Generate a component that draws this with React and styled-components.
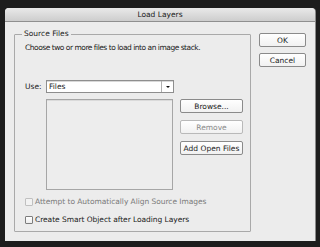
import React from "react";
import styled, { createGlobalStyle } from "styled-components";

const Global = createGlobalStyle`
  html, body { margin: 0; padding: 0; background: #1d1d1d; }
  body { font-family: "DejaVu Sans", "Liberation Sans", sans-serif; }
  #root { padding: 8px 5px 0 5px; }
`;

const Dialog = styled.div`
  width: 310px;
  height: 233px;
  background: #ececec;
  border-radius: 4px 4px 0 0;
  overflow: hidden;
  box-shadow: 1px 0 0 #8a8a8a;
  display: flex;
  flex-direction: column;
`;

const TitleBar = styled.div`
  height: 13px;
  flex: none;
  background: linear-gradient(#e9e9e9, #cdcdcd);
  border-bottom: 1px solid #8f8f8f;
  display: flex;
  align-items: center;
  justify-content: center;
  font-size: 7.5px;
  color: #1a1a1a;
`;

const Content = styled.div`
  display: flex;
  padding: 7px 0 0 9px;
`;

const Group = styled.fieldset`
  margin: 0;
  width: 237px;
  height: 203px;
  box-sizing: border-box;
  border: 1px solid #a9a9a9;
  border-radius: 1px;
  padding: 0 7px 0 10px;
  display: flex;
  flex-direction: column;
`;

const Legend = styled.legend`
  font-size: 7.5px;
  line-height: 10px;
  padding: 0 2px;
  margin-left: -3px;
  color: #1a1a1a;
`;

const Text = styled.div`
  font-size: 7.5px;
  line-height: 10px;
  letter-spacing: -0.48px;
  color: #1a1a1a;
  margin-top: 4px;
`;

const UseRow = styled.div`
  display: flex;
  align-items: center;
  margin-top: 27px;
`;

const Label = styled.span`
  width: 21px;
  font-size: 7.5px;
  color: #1a1a1a;
`;

const Select = styled.div`
  width: 128px;
  height: 13px;
  box-sizing: border-box;
  background: #fff;
  border: 1px solid #8e8e8e;
  box-shadow: inset 0 1px 0 #d8d8d8;
  display: flex;
  align-items: center;
  font-size: 7.5px;
  color: #1a1a1a;
`;

const SelectValue = styled.span`
  flex: 1;
  padding-left: 2px;
`;

const SelectArrow = styled.span`
  width: 11px;
  height: 100%;
  border-left: 1px solid #b0b0b0;
  display: flex;
  align-items: center;
  justify-content: center;
  &::after {
    content: "";
    border-left: 2px solid transparent;
    border-right: 2px solid transparent;
    border-top: 2px solid #111;
  }
`;

const ListRow = styled.div`
  display: flex;
  margin-top: 6px;
  margin-left: 21px;
  gap: 7px;
`;

const List = styled.div`
  width: 127px;
  height: 91px;
  box-sizing: border-box;
  border: 1px solid #a6a6a6;
  box-shadow: inset 0 1px 0 #dadada;
  background: #ededed;
`;

const ButtonColumn = styled.div`
  display: flex;
  flex-direction: column;
  gap: ${(p) => p.$gap}px;
`;

const Button = styled.div`
  width: ${(p) => p.$w}px;
  height: 14px;
  box-sizing: border-box;
  border: 1px solid ${(p) => (p.$disabled ? "#b9b9b9" : "#8a8a8a")};
  border-radius: 2px;
  background: linear-gradient(#ffffff, #f1f1f1);
  display: flex;
  align-items: center;
  justify-content: center;
  font-size: 7.5px;
  color: ${(p) => (p.$disabled ? "#8a8a8a" : "#1a1a1a")};
`;

const CheckRow = styled.div`
  display: flex;
  align-items: center;
  gap: 2px;
  margin-top: ${(p) => p.$mt}px;
  font-size: 7.5px;
  line-height: 10px;
  letter-spacing: -0.05px;
  color: ${(p) => (p.$disabled ? "#7a7a7a" : "#1a1a1a")};
`;

const Box = styled.span`
  width: 8px;
  height: 8px;
  box-sizing: border-box;
  border: 1px solid ${(p) => (p.$disabled ? "#c0c0c0" : "#7d7d7d")};
  background: ${(p) => (p.$disabled ? "#f2f2f2" : "linear-gradient(#fff, #ececec)")};
  border-radius: 1px;
`;

const Side = styled.div`
  margin-left: 8px;
  padding-top: 4px;
`;

export default function App() {
  return (
    <>
      <Global />
      <Dialog>
        <TitleBar>Load Layers</TitleBar>
        <Content>
          <Group>
            <Legend>Source Files</Legend>
            <Text>Choose two or more files to load into an image stack.</Text>
            <UseRow>
              <Label>Use:</Label>
              <Select>
                <SelectValue>Files</SelectValue>
                <SelectArrow />
              </Select>
            </UseRow>
            <ListRow>
              <List />
              <ButtonColumn $gap={7}>
                <Button $w={63}>Browse...</Button>
                <Button $w={63} $disabled>Remove</Button>
                <Button $w={63}>Add Open Files</Button>
              </ButtonColumn>
            </ListRow>
            <CheckRow $mt={7} $disabled>
              <Box $disabled />
              Attempt to Automatically Align Source Images
            </CheckRow>
            <CheckRow $mt={8}>
              <Box />
              Create Smart Object after Loading Layers
            </CheckRow>
          </Group>
          <Side>
            <ButtonColumn $gap={6}>
              <Button $w={47}>OK</Button>
              <Button $w={47}>Cancel</Button>
            </ButtonColumn>
          </Side>
        </Content>
      </Dialog>
    </>
  );
}
